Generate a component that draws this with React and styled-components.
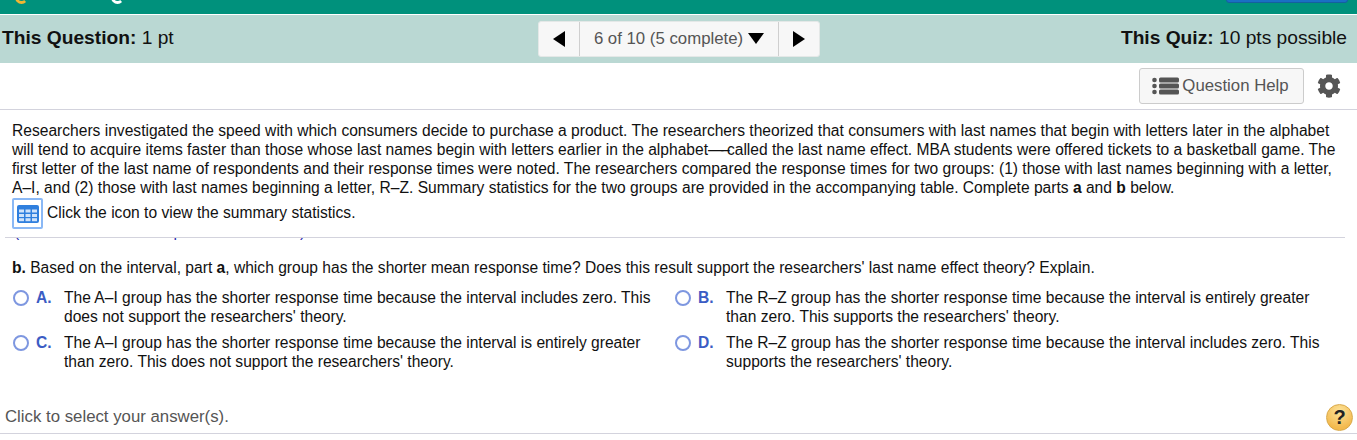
import styled, { createGlobalStyle } from 'styled-components';
import { FaCog } from 'react-icons/fa';

const GlobalStyle = createGlobalStyle`
  html, body {
    margin: 0;
    padding: 0;
    background: #fff;
    overflow: hidden;
  }
  body {
    font-family: "Liberation Sans", Arial, sans-serif;
    color: #111;
  }
`;

const Page = styled.div`
  width: 1357px;
  height: 440px;
  overflow: hidden;
  display: flex;
  flex-direction: column;
`;

const TopBar = styled.div`
  height: 14px;
  flex: none;
  background: #00917c;
  border-bottom: 1px solid #fff;
  position: relative;
  overflow: hidden;
`;

const TopMark = styled.span`
  position: absolute;
  top: -9px;
  left: ${(p) => p.$left}px;
  width: 13px;
  height: 13px;
  box-sizing: border-box;
  border-radius: 50%;
  border: 3px solid ${(p) => p.$color};
  border-top-color: transparent;
  border-right-color: transparent;
`;

const TopButton = styled.span`
  position: absolute;
  top: -10px;
  left: 1226px;
  width: 122px;
  height: 13px;
  box-sizing: border-box;
  background: #1a6fc4;
  border: 1px solid #14609f;
  border-radius: 3px;
`;

const ScoreBar = styled.div`
  height: 48px;
  flex: none;
  box-sizing: border-box;
  background: #bad8d3;
  display: grid;
  grid-template-columns: 1fr auto 1fr;
  align-items: center;
  padding: 0 10px;
  font-size: 19.2px;
`;

const Score = styled.div`
  color: #111;
  white-space: nowrap;
  text-align: ${(p) => (p.$right ? 'right' : 'left')};
  margin-left: ${(p) => (p.$right ? 0 : -8)}px;
  margin-top: -2px;
  b {
    font-weight: 700;
  }
`;

const Pager = styled.div`
  display: flex;
  height: 36px;
  width: 282px;
  margin-left: 1px;
  margin-top: -1px;
  background: #f7f7f7;
  border-radius: 3px;
  border: 1px solid #e4e8e7;
  box-sizing: border-box;
`;

const PagerArrow = styled.div`
  width: 40px;
  flex: none;
  display: flex;
  align-items: center;
  justify-content: center;
`;

const PagerLabel = styled.div`
  flex: 1;
  display: flex;
  align-items: center;
  justify-content: center;
  gap: 5px;
  color: #555;
  font-size: 16.8px;
  white-space: nowrap;
  border-left: 1px solid #cfcfcf;
  border-right: 1px solid #cfcfcf;
`;

const Toolbar = styled.div`
  height: 47px;
  flex: none;
  box-sizing: border-box;
  border-bottom: 1px solid #d3d3dd;
  display: flex;
  align-items: flex-start;
  justify-content: flex-end;
  padding: 5px 16px 0 0;
  gap: 13px;
`;

const HelpButton = styled.div`
  width: 165px;
  height: 36px;
  box-sizing: border-box;
  border: 1px solid #ccc;
  border-radius: 3px;
  background: #f7f7f7;
  color: #555;
  font-size: 16.8px;
  display: flex;
  align-items: center;
  justify-content: center;
  gap: 3px;
  padding-right: 2px;
`;

const GearWrap = styled.div`
  height: 36px;
  display: flex;
  align-items: center;
  color: #555;
  font-size: 24px;
`;

const Question = styled.div`
  height: 128px;
  flex: none;
  box-sizing: border-box;
  margin: 0 12px 0 5px;
  padding: 11px 0 0 7px;
  border-bottom: 1px solid #d3d3dd;
  font-size: 15.6px;
  line-height: 19px;
`;

const Paragraph = styled.div`
  width: 1328px;
`;

const Dash = styled.span`
  letter-spacing: -2.7px;
`;

const IconRow = styled.div`
  display: flex;
  align-items: center;
  gap: 4px;
  margin-top: 1px;
`;

const IconBox = styled.div`
  width: 31px;
  height: 31px;
  box-sizing: border-box;
  border: 2px solid #8ab8f5;
  border-radius: 2px;
  display: flex;
  align-items: center;
  justify-content: center;
`;

const IconLabel = styled.span`
  margin-top: -2px;
`;

const ClippedLine = styled.div`
  height: 4px;
  flex: none;
  overflow: hidden;
  padding-left: 14px;
  color: #2a2ab0;
  font-size: 15.6px;
  line-height: 19px;
  div {
    margin-top: -16px;
  }
`;

const Answers = styled.div`
  flex: none;
  padding: 16px 0 0 13px;
  font-size: 15.6px;
  line-height: 19px;
`;

const Prompt = styled.div`
  margin-bottom: 11px;
  margin-left: -1px;
`;

const Choices = styled.div`
  display: grid;
  grid-template-columns: 662px 650px;
  row-gap: 7px;
`;

const Choice = styled.div`
  display: flex;
  align-items: flex-start;
`;

const Radio = styled.span`
  width: 16px;
  height: 16px;
  box-sizing: border-box;
  flex: none;
  margin-top: 2px;
  border: 2px solid #7e97e0;
  border-radius: 50%;
  background: #fff;
`;

const Letter = styled.b`
  width: 28px;
  flex: none;
  margin-left: 7px;
  color: #3b5cc4;
`;

const ChoiceText = styled.div`
  width: ${(p) => p.$width}px;
`;

const Footer = styled.div`
  height: 41px;
  flex: none;
  box-sizing: border-box;
  margin-top: 22px;
  padding: 10px 4px 3px 5px;
  border-bottom: 1px solid #d3d3dd;
  display: flex;
  align-items: center;
  justify-content: space-between;
  color: #555;
  font-size: 16.8px;
`;

const HelpBadge = styled.div`
  width: 27px;
  height: 27px;
  margin-top: 1px;
  box-sizing: border-box;
  border-radius: 50%;
  border: 1px solid #d9a94a;
  background: radial-gradient(circle at 50% 25%, #fde39a, #f3b94d 75%);
  color: #222;
  font-size: 20px;
  font-weight: 700;
  display: flex;
  align-items: center;
  justify-content: center;
`;

const TriangleIcon = ({ points, w, h }) => (
  <svg width={w} height={h} viewBox={`0 0 ${w} ${h}`}>
    <polygon points={points} fill="#000" />
  </svg>
);

const ListIcon = () => (
  <svg width="27" height="18" viewBox="0 0 27 18" fill="#555">
    <circle cx="2.5" cy="3" r="2.3" />
    <circle cx="2.5" cy="9" r="2.3" />
    <circle cx="2.5" cy="15" r="2.3" />
    <rect x="7" y="0.5" width="20" height="5" rx="1.5" />
    <rect x="7" y="6.5" width="20" height="5" rx="1.5" />
    <rect x="7" y="12.5" width="20" height="5" rx="1.5" />
  </svg>
);

const TableIcon = () => (
  <svg width="22" height="18" viewBox="0 0 22 18">
    <rect width="22" height="18" rx="2" fill="#2f7fde" />
    {[4.5, 9, 13.2].map((y) =>
      [2, 8.5, 15].map((x) => <rect key={`${x}-${y}`} x={x} y={y} width="5" height="3" fill="#cfe2fa" />)
    )}
  </svg>
);

const choices = [
  {
    letter: 'A.',
    width: 592,
    text: "The A–I group has the shorter response time because the interval includes zero. This does not support the researchers' theory.",
  },
  {
    letter: 'B.',
    width: 590,
    text: "The R–Z group has the shorter response time because the interval is entirely greater than zero. This supports the researchers' theory.",
  },
  {
    letter: 'C.',
    width: 585,
    text: "The A–I group has the shorter response time because the interval is entirely greater than zero. This does not support the researchers' theory.",
  },
  {
    letter: 'D.',
    width: 600,
    text: "The R–Z group has the shorter response time because the interval includes zero. This supports the researchers' theory.",
  },
];

const App = () => (
  <Page>
    <GlobalStyle />
    <TopBar>
      <TopMark $left={15} $color="#f2b632" />
      <TopMark $left={111} $color="#fff" />
      <TopButton />
    </TopBar>
    <ScoreBar>
      <Score>
        <b>This Question:</b> 1 pt
      </Score>
      <Pager>
        <PagerArrow>
          <TriangleIcon w={12} h={16} points="12,0 12,16 0,8" />
        </PagerArrow>
        <PagerLabel>
          6 of 10 (5 complete)
          <TriangleIcon w={16} h={11} points="0,0 16,0 8,11" />
        </PagerLabel>
        <PagerArrow>
          <TriangleIcon w={12} h={16} points="0,0 12,8 0,16" />
        </PagerArrow>
      </Pager>
      <Score $right>
        <b>This Quiz:</b> 10 pts possible
      </Score>
    </ScoreBar>
    <Toolbar>
      <HelpButton>
        <ListIcon />
        Question Help
      </HelpButton>
      <GearWrap>
        <FaCog />
      </GearWrap>
    </Toolbar>
    <Question>
      <Paragraph>
        Researchers investigated the speed with which consumers decide to purchase a product. The researchers theorized
        that consumers with last names that begin with letters later in the alphabet will tend to acquire items faster
        than those whose last names begin with letters earlier in the alphabet<Dash>—–</Dash>called the last name effect. MBA
        students were offered tickets to a basketball game. The first letter of the last name of respondents and their
        response times were noted. The researchers compared the response times for two groups: (1) those with last names
        beginning with a letter, A–I, and (2) those with last names beginning a letter, R–Z. Summary statistics for the
        two groups are provided in the accompanying table. Complete parts <b>a</b> and <b>b</b> below.
      </Paragraph>
      <IconRow>
        <IconBox>
          <TableIcon />
        </IconBox>
        <IconLabel>Click the icon to view the summary statistics.</IconLabel>
      </IconRow>
    </Question>
    <ClippedLine>
      <div>(Round to two decimal places as needed.)</div>
    </ClippedLine>
    <Answers>
      <Prompt>
        <b>b.</b> Based on the interval, part <b>a</b>, which group has the shorter mean response time? Does this result
        support the researchers' last name effect theory? Explain.
      </Prompt>
      <Choices>
        {choices.map((c) => (
          <Choice key={c.letter}>
            <Radio />
            <Letter>{c.letter}</Letter>
            <ChoiceText $width={c.width}>{c.text}</ChoiceText>
          </Choice>
        ))}
      </Choices>
    </Answers>
    <Footer>
      Click to select your answer(s).
      <HelpBadge>?</HelpBadge>
    </Footer>
  </Page>
);

export default App;
